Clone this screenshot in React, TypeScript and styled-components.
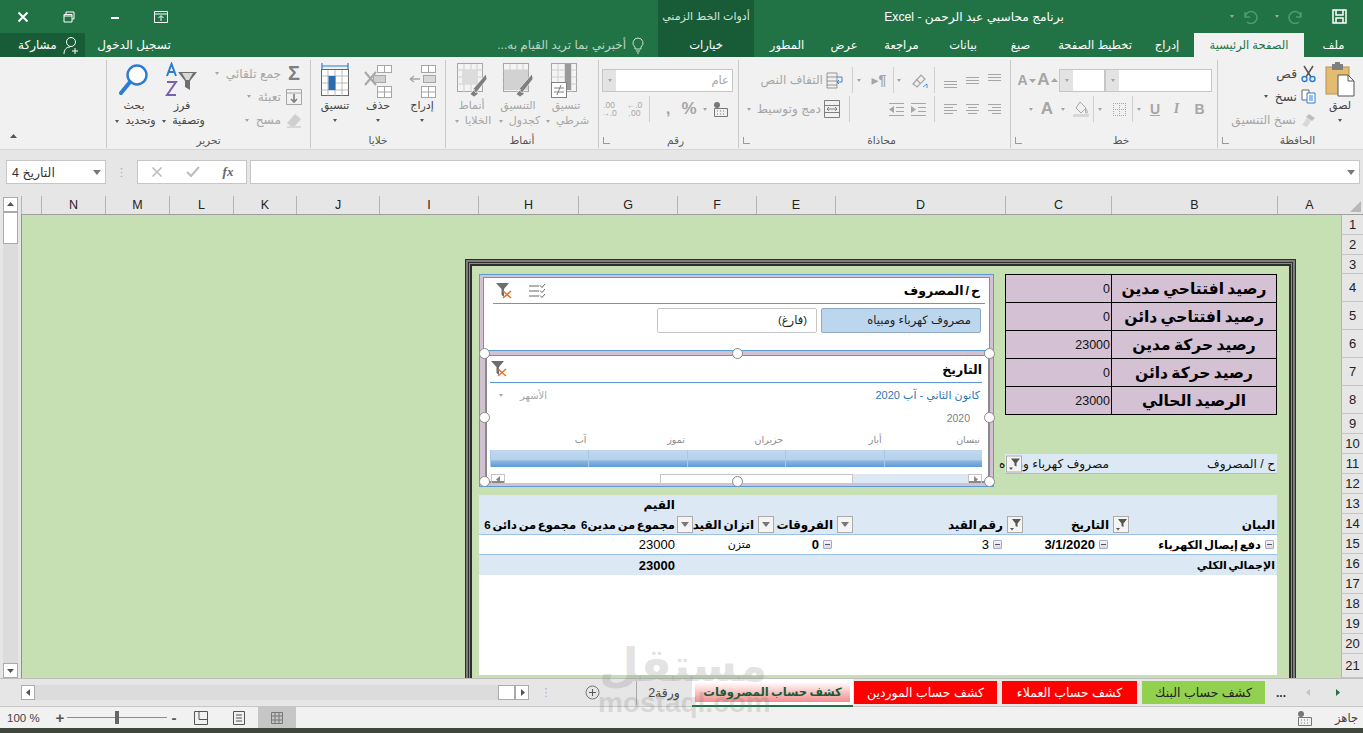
import React from 'react';
import styled, { createGlobalStyle } from 'styled-components';

const UI_FONT = '"Liberation Sans", "DejaVu Sans", sans-serif';
const GREEN = '#217346';
const DARK_GREEN = '#185c37';
const OFF = '#a6a6a6';
const ICON = '#7f7f7f';
const BLUE = '#2b7cd3';

const GlobalStyle = createGlobalStyle`
    html, body {
        margin: 0;
        width: 1363px;
        height: 733px;
        overflow: hidden;
        background: #f1f1f1;
        font-family: ${UI_FONT};
    }
    * { box-sizing: border-box; }
`;

const Page = styled.div`
    position: relative;
    width: 1363px;
    height: 733px;
    display: flex;
    flex-direction: column;
    overflow: hidden;
`;

/* title bar */
const TitleBar = styled.div`
    height: 33px;
    background: ${GREEN};
    display: flex;
    align-items: center;
    color: #fff;
`;
const WindowButton = styled.div`
    width: 46px;
    display: flex;
    justify-content: center;
    align-items: center;
`;
const TitleSpacer = styled.div<{ $w: number }>`
    width: ${(p) => p.$w}px;
    flex: none;
`;
const ContextTitle = styled.div`
    width: 96px;
    height: 33px;
    background: ${DARK_GREEN};
    display: flex;
    align-items: center;
    justify-content: center;
    font-size: 11px;
    color: #d5e5da;
    white-space: nowrap;
    direction: rtl;
`;
const DocTitle = styled.div`
    width: 440px;
    text-align: center;
    font-size: 12.2px;
    white-space: nowrap;
    direction: rtl;
`;
const QatSlot = styled.div<{ $w: number }>`
    width: ${(p) => p.$w}px;
    display: flex;
    justify-content: center;
    align-items: center;
`;

/* tab strip */
const TabStrip = styled.div`
    height: 24px;
    background: ${GREEN};
    display: flex;
    flex-direction: row-reverse;
    align-items: stretch;
    color: #fff;
`;
const TabItem = styled.div<{ $w: number; $active?: boolean; $context?: boolean }>`
    width: ${(p) => p.$w}px;
    display: flex;
    align-items: center;
    justify-content: center;
    font-size: 11.5px;
    white-space: nowrap;
    direction: rtl;
    background: ${(p) => (p.$active ? '#f1f1f1' : p.$context ? DARK_GREEN : 'transparent')};
    color: ${(p) => (p.$active ? GREEN : '#fff')};
`;
const TellMe = styled.div`
    flex: 1;
    display: flex;
    flex-direction: row-reverse;
    align-items: center;
    gap: 6px;
    padding-right: 14px;
    font-size: 12px;
    color: #bcd4c5;
    white-space: nowrap;
`;
const TellMeText = styled.span`
    direction: rtl;
`;
const SignIn = styled.div`
    width: 98px;
    display: flex;
    align-items: center;
    justify-content: center;
    font-size: 12px;
    white-space: nowrap;
    direction: rtl;
`;
const ShareBox = styled.div`
    width: 85px;
    background: ${DARK_GREEN};
    display: flex;
    align-items: center;
    gap: 6px;
    padding-left: 18px;
    font-size: 12px;
    white-space: nowrap;
`;

/* ribbon */
const Ribbon = styled.div`
    height: 93px;
    background: #f1f1f1;
    display: flex;
    flex-direction: row-reverse;
    border-bottom: 1px solid #d6d6d6;
    padding-top: 3px;
`;
const GroupBox = styled.section<{ $w: number }>`
    width: ${(p) => p.$w}px;
    height: 88px;
    border-left: 1px solid #c9c9c9;
    display: flex;
    flex-direction: column;
    position: relative;
`;
const GroupBody = styled.div`
    flex: 1;
    display: flex;
    flex-direction: row-reverse;
    min-height: 0;
`;
const GroupLabel = styled.div<{ $launcher?: boolean }>`
    height: 16px;
    line-height: 16px;
    text-align: center;
    font-size: 10.5px;
    color: #555;
    direction: rtl;
    white-space: nowrap;
    padding-left: ${(p) => (p.$launcher ? 14 : 0)}px;
`;
const Launcher = styled.div`
    position: absolute;
    left: 4px;
    bottom: 4px;
    width: 7px;
    height: 7px;
    border-left: 1px solid #9a9a9a;
    border-bottom: 1px solid #9a9a9a;
`;
const CollapseCell = styled.div`
    flex: 1;
    display: flex;
    align-items: flex-end;
    padding: 0 0 8px 9px;
`;
const LargeButton = styled.div<{ $w: number; $off?: boolean }>`
    width: ${(p) => p.$w}px;
    flex: none;
    display: flex;
    flex-direction: column;
    align-items: center;
    padding-top: 2px;
    font-size: 11px;
    line-height: 15px;
    text-align: center;
    direction: rtl;
    white-space: nowrap;
    color: ${(p) => (p.$off ? OFF : '#444')};
`;
const IconSlot = styled.div`
    height: 36px;
    display: flex;
    align-items: center;
    justify-content: center;
`;
const CaretLine = styled.div`
    height: 15px;
    display: flex;
    align-items: center;
`;
const Caret = styled.span<{ $off?: boolean }>`
    display: inline-block;
    width: 0;
    height: 0;
    margin: 0 3px;
    vertical-align: middle;
    border-left: 2.5px solid transparent;
    border-right: 2.5px solid transparent;
    border-top: 3px solid ${(p) => (p.$off ? OFF : '#555')};
`;
const BigCaret = styled(Caret)`
    border-left-width: 4.5px;
    border-right-width: 4.5px;
    border-top-width: 5px;
    border-top-color: #777;
`;
const SmallStack = styled.div<{ $w: number; $pad?: number }>`
    width: ${(p) => p.$w}px;
    flex: none;
    display: flex;
    flex-direction: column;
    padding-top: 2px;
    padding-right: ${(p) => p.$pad ?? 1}px;
`;
const SmallRow = styled.div<{ $off?: boolean }>`
    height: 23.5px;
    display: flex;
    align-items: center;
    gap: 4px;
    direction: rtl;
    font-size: 12.2px;
    white-space: nowrap;
    color: ${(p) => (p.$off ? OFF : '#444')};
`;
const ToolColumn = styled.div`
    display: flex;
    flex-direction: column;
    width: 100%;
    padding-top: 8px;
    gap: 5px;
`;
const ToolRow = styled.div`
    height: 24px;
    display: flex;
    flex-direction: row-reverse;
    align-items: center;
`;
const Tool = styled.div<{ $w: number; $large?: boolean }>`
    width: ${(p) => p.$w}px;
    flex: none;
    display: flex;
    align-items: center;
    justify-content: center;
    font-size: ${(p) => (p.$large ? 17 : 14)}px;
    font-weight: 700;
    color: ${OFF};
`;
const ItalicTool = styled(Tool)`
    font-style: italic;
    font-family: "Liberation Serif", serif;
`;
const UnderlineTool = styled(Tool)`
    text-decoration: underline;
`;
const SigmaTool = styled(Tool)`
    font-size: 20px;
    color: ${ICON};
`;
const ToolText = styled.div`
    display: flex;
    align-items: center;
    gap: 3px;
    direction: rtl;
    font-size: 12.2px;
    color: ${OFF};
    white-space: nowrap;
`;
const ToolDivider = styled.div`
    width: 1px;
    height: 26px;
    background: #cfcfcf;
    flex: none;
`;
const Combo = styled.div<{ $w: number }>`
    width: ${(p) => p.$w}px;
    height: 23px;
    flex: none;
    border: 1px solid #c6c6c6;
    background: #fff;
    display: flex;
    align-items: center;
    font-size: 11.5px;
    color: ${OFF};
    padding-right: 3px;
    position: relative;
    direction: rtl;
`;
const ComboArrow = styled.div`
    position: absolute;
    left: 0;
    top: 0;
    bottom: 0;
    width: 13px;
    background: #e3e3e3;
    display: flex;
    align-items: center;
    justify-content: center;
`;
const DecimalStack = styled.div`
    display: flex;
    flex-direction: column;
    align-items: center;
    font-size: 8.5px;
    font-weight: 400;
    line-height: 8px;
    color: ${OFF};
`;

/* formula bar */
const FormulaBar = styled.div`
    height: 46px;
    background: #e6e6e6;
    display: flex;
    align-items: flex-start;
    padding: 10px 3px 0 6px;
`;
const NameBox = styled.div`
    width: 100px;
    height: 24px;
    background: #fff;
    border: 1px solid #c6c6c6;
    display: flex;
    align-items: center;
    justify-content: space-between;
    padding: 0 1px 0 5px;
    font-size: 12.5px;
    color: #333;
`;
const NameText = styled.span`
    direction: rtl;
    white-space: nowrap;
`;
const Grip = styled.div`
    width: 31px;
    height: 24px;
    display: flex;
    justify-content: center;
    align-items: center;
    color: #aaa;
    font-size: 11px;
`;
const FormulaButtons = styled.div`
    width: 110px;
    height: 24px;
    background: #fff;
    border: 1px solid #c6c6c6;
    display: flex;
    align-items: center;
    justify-content: space-around;
    padding: 0 1px;
`;
const FxLabel = styled.span`
    font-family: "Liberation Serif", serif;
    font-style: italic;
    font-weight: 700;
    font-size: 13px;
    color: #666;
`;
const FormulaInput = styled.div`
    flex: 1;
    height: 24px;
    margin-left: 3px;
    background: #fff;
    border: 1px solid #c6c6c6;
    display: flex;
    align-items: center;
    justify-content: flex-end;
    padding-right: 1px;
`;

/* worksheet */
const Workbook = styled.div`
    height: 482px;
    display: flex;
`;
const VScroll = styled.div`
    width: 21px;
    background: #e6e6e6;
    display: flex;
    flex-direction: column;
    align-items: center;
    padding: 1px 1px 0 0;
`;
const VButton = styled.div`
    width: 15px;
    height: 15px;
    background: #fff;
    border: 1px solid #ababab;
    display: flex;
    align-items: center;
    justify-content: center;
    flex: none;
`;
const VThumb = styled.div`
    width: 15px;
    height: 32px;
    flex: none;
    background: #fff;
    border: 1px solid #ababab;
`;
const VTrack = styled.div`
    flex: 1;
    width: 15px;
    background: #dcdcdc;
`;
const SheetArea = styled.div`
    flex: 1;
    display: flex;
    flex-direction: column;
    min-width: 0;
`;
const ColumnHeaders = styled.div`
    height: 19px;
    flex: none;
    display: flex;
    flex-direction: row-reverse;
    background: #e6e6e6;
    border-bottom: 1px solid #9f9f9f;
`;
const Corner = styled.div`
    width: 22px;
    position: relative;
    overflow: hidden;
    &::after {
        content: '';
        position: absolute;
        right: 2px;
        bottom: 2px;
        border-left: 11px solid transparent;
        border-bottom: 11px solid #b8b8b8;
    }
`;
const ColumnCell = styled.div<{ $w: number }>`
    width: ${(p) => p.$w}px;
    border-left: 1px solid #b4b4b4;
    font-size: 12.5px;
    line-height: 18px;
    text-align: center;
    color: #222;
`;
const SheetBody = styled.div`
    flex: 1;
    display: flex;
    flex-direction: row-reverse;
    min-height: 0;
`;
const RowHeaders = styled.div`
    width: 22px;
    flex: none;
    background: #e6e6e6;
    overflow: hidden;
`;
const RowCell = styled.div<{ $h: number }>`
    height: ${(p) => p.$h}px;
    border-bottom: 1px solid #c4c4c4;
    border-left: 1px solid #b4b4b4;
    font-size: 13px;
    display: flex;
    align-items: center;
    justify-content: center;
    color: #222;
`;
const Canvas = styled.div`
    flex: 1;
    background: #c6e0b4;
    overflow: hidden;
    border-left: 1px solid #8f8f8f;
    display: flex;
    justify-content: flex-end;
    padding: 44px 45px 0 0;
`;
const Frame = styled.div`
    width: 831px;
    height: 470px;
    flex: none;
    border: 1px solid #2e2e2e;
    box-shadow: inset 0 0 0 2px #7d7d7d, inset 0 0 0 3px #2e2e2e, inset 0 0 0 4px #8d8d8d, inset 0 0 0 6px #2e2e2e;
    padding: 14px 18px 0 13px;
`;
const FrameTop = styled.div`
    height: 221px;
    display: flex;
    flex-direction: row-reverse;
    justify-content: space-between;
`;
const SideColumn = styled.div`
    width: 272px;
    display: flex;
    flex-direction: column;
`;
const BalanceTable = styled.div`
    display: grid;
    direction: rtl;
    grid-template-columns: 165px 106px;
    grid-auto-rows: 28px;
    border-top: 1px solid #000;
    border-right: 1px solid #000;
    background: #d4c1d4;
`;
const BalanceLabel = styled.div`
    border-left: 1px solid #000;
    border-bottom: 1px solid #000;
    display: flex;
    align-items: center;
    justify-content: center;
    font-size: 15.5px;
    word-spacing: -1px;
    font-weight: 700;
    color: #000;
    white-space: nowrap;
`;
const BalanceValue = styled.div`
    border-left: 1px solid #000;
    border-bottom: 1px solid #000;
    display: flex;
    align-items: center;
    justify-content: flex-start;
    padding-right: 1px;
    font-size: 12.5px;
    color: #111;
`;
const PageFilter = styled.div`
    margin-top: 39px;
    height: 20px;
    background: #dce9f5;
    border-bottom: 1px solid #9cc2e5;
    display: grid;
    direction: rtl;
    grid-template-columns: 166px 106px;
    align-items: center;
    font-size: 12.2px;
    color: #111;
`;
const PageFilterKey = styled.div`
    padding-right: 2px;
    white-space: nowrap;
`;
const PageFilterValue = styled.div`
    position: relative;
    padding-right: 2px;
    white-space: nowrap;
`;
const FilterBadge = styled.div`
    width: 16px;
    height: 17px;
    flex: none;
    background: #f4f4f4;
    border: 1px solid #ababab;
    display: flex;
    align-items: center;
    justify-content: center;
`;
const PageFilterBadge = styled(FilterBadge)`
    position: absolute;
    left: 1px;
    top: 50%;
    transform: translateY(-50%);
`;

/* slicers */
const SlicerStack = styled.div`
    position: relative;
    width: 515px;
    height: 213px;
    background: #d1c1d2;
    border: 1px solid #5b9bd5;
    padding: 2px 3px 0 3px;
`;
const Slicer = styled.div`
    height: 74px;
    background: #fff;
    border: 1px solid #5b9bd5;
    padding: 0 4px 0 9px;
`;
const SlicerHead = styled.div`
    height: 26px;
    display: flex;
    flex-direction: row-reverse;
    align-items: center;
    justify-content: space-between;
    border-bottom: 1px solid #5b9bd5;
    padding: 0 5px 0 2px;
`;
const SlicerTitle = styled.div`
    direction: rtl;
    font-size: 12.5px;
    word-spacing: -1.5px;
    font-weight: 700;
    color: #000;
    white-space: nowrap;
`;
const SlicerTools = styled.div`
    display: flex;
    align-items: center;
    gap: 15px;
`;
const SlicerItems = styled.div`
    display: flex;
    flex-direction: row-reverse;
    gap: 4px;
    padding: 4px 4px 0 0;
`;
const SlicerItem = styled.div<{ $on?: boolean }>`
    width: 160px;
    height: 25px;
    border: 1px solid ${(p) => (p.$on ? '#8fa9c3' : '#c6c6c6')};
    border-radius: 2px;
    background: ${(p) => (p.$on ? '#bcd6ee' : '#fff')};
    direction: rtl;
    font-size: 11.5px;
    line-height: 23px;
    padding-right: 9px;
    color: #222;
`;
const Timeline = styled.div`
    position: relative;
    margin: 4px 0 0 2px;
    height: 128px;
    background: #fff;
    border: 2px solid #8a8a8a;
    border-width: 1px 2px 2px 2px;
    padding: 0 6px 0 3px;
`;
const TimelineHead = styled(SlicerHead)`
    height: 27px;
    padding: 0;
`;
const RangeRow = styled.div`
    height: 25px;
    display: flex;
    flex-direction: row-reverse;
    justify-content: space-between;
    align-items: center;
    padding: 0 2px 0 6px;
`;
const RangeText = styled.div`
    direction: rtl;
    font-size: 11px;
    color: #2e75b6;
`;
const LevelPicker = styled.div`
    display: flex;
    flex-direction: row-reverse;
    gap: 14px;
    align-items: center;
    font-size: 10px;
    color: ${OFF};
`;
const YearRow = styled.div`
    height: 20px;
    text-align: right;
    font-size: 10.5px;
    line-height: 20px;
    color: #7f7f7f;
    padding-right: 12px;
`;
const MonthRow = styled.div`
    display: grid;
    direction: rtl;
    grid-template-columns: repeat(5, 1fr);
    height: 22px;
    align-items: center;
`;
const MonthLabel = styled.div`
    font-size: 9.5px;
    color: #8a8a8a;
    padding-right: 2px;
`;
const MonthBar = styled.div`
    display: grid;
    direction: rtl;
    grid-template-columns: repeat(5, 1fr);
    height: 17px;
`;
const MonthSegment = styled.div`
    background: linear-gradient(#c0d8ef 0%, #b5d1ec 58%, #8fb7e0 64%, #5b9bd5 100%);
    border-left: 1px solid #a9c8e6;
`;
const TimelineScroll = styled.div`
    margin-top: 7px;
    height: 9px;
    display: flex;
    flex-direction: row-reverse;
    align-items: stretch;
    overflow: hidden;
`;
const ScrollEnd = styled.div`
    width: 14px;
    border: 1px solid #c6c6c6;
    border-bottom: 0;
    display: flex;
    align-items: center;
    justify-content: center;
`;
const TimelineGap = styled.div<{ $w: number; $tint?: boolean }>`
    width: ${(p) => p.$w}px;
    background: ${(p) => (p.$tint ? '#dce9f5' : '#fff')};
`;
const TimelineThumb = styled.div`
    width: 193px;
    background: #fff;
    border: 1px solid #c6c6c6;
    border-bottom: 0;
`;
const Handle = styled.div<{ $x: number; $y: number }>`
    position: absolute;
    left: ${(p) => p.$x - 6}px;
    top: ${(p) => p.$y - 6}px;
    width: 11px;
    height: 11px;
    border-radius: 50%;
    background: #fff;
    border: 1.5px solid #8a8a8a;
`;

/* pivot */
const Pivot = styled.div`
    height: 180px;
    background: #fff;
    display: grid;
    direction: rtl;
    grid-template-columns: 166px 106px 170px 79px 79px 99px 99px;
    grid-auto-rows: 20px;
    align-content: start;
    color: #000;
`;
const PivotCell = styled.div<{ $tone?: 'head' | 'total' | 'body'; $bold?: boolean; $size?: number; $inset?: number }>`
    display: flex;
    align-items: center;
    justify-content: space-between;
    padding: 0 ${(p) => p.$inset ?? 2}px 0 2px;
    white-space: nowrap;
    word-spacing: -1.5px;
    font-size: ${(p) => p.$size ?? 12}px;
    font-weight: ${(p) => (p.$bold ? 700 : 400)};
    background: ${(p) => (p.$tone === 'body' ? '#fff' : '#dce9f5')};
    border-bottom: ${(p) => (p.$tone === 'total' ? 'none' : '1px solid #9cc2e5')};
`;
const PivotHeadTop = styled(PivotCell)`
    border-bottom: none;
`;
const Outline = styled.span`
    display: inline-block;
    width: 9px;
    height: 9px;
    margin: 0 1px 0 4px;
    flex: none;
    border: 1px solid #a9a9c4;
    border-radius: 1px;
    background: linear-gradient(#f4f4fa, #d9d9e8);
    position: relative;
    &::after {
        content: '';
        position: absolute;
        left: 1px;
        right: 1px;
        top: 3px;
        height: 1px;
        background: #555;
    }
`;
const CellLead = styled.span`
    display: inline-flex;
    align-items: center;
`;

/* sheet tabs */
const SheetTabsBar = styled.div`
    height: 29px;
    background: #e6e6e6;
    border-top: 1px solid #bdbdbd;
    border-bottom: 1px solid #c6c6c6;
    display: flex;
    flex-direction: row-reverse;
    align-items: center;
`;
const TabNav = styled.div`
    width: 98px;
    display: flex;
    flex-direction: row-reverse;
    align-items: center;
    padding-right: 21px;
`;
const NavDots = styled.span`
    margin-right: 18px;
    font-size: 12px;
    font-weight: 700;
    color: #333;
`;
const SheetTab = styled.div<{ $bg: string; $w: number; $fg: string }>`
    width: ${(p) => p.$w}px;
    height: 23px;
    margin-left: 5px;
    background: ${(p) => p.$bg};
    color: ${(p) => p.$fg};
    font-size: 12.5px;
    display: flex;
    align-items: center;
    justify-content: center;
    direction: rtl;
    white-space: nowrap;
`;
const ActiveSheetTab = styled.div`
    width: 161px;
    height: 28px;
    margin-left: 6px;
    margin-right: -4px;
    background: #fff;
    border-bottom: 2px solid ${GREEN};
    padding: 3px;
    display: flex;
`;
const ActiveSheetFill = styled.div`
    flex: 1;
    background: linear-gradient(#fff 0%, #f9c5c5 50%, #f28f8f 100%);
    color: ${DARK_GREEN};
    font-size: 11.6px;
    font-weight: 700;
    word-spacing: -1px;
    display: flex;
    align-items: center;
    justify-content: center;
    direction: rtl;
    white-space: nowrap;
`;
const PlainTab = styled.div`
    width: 50px;
    text-align: center;
    font-size: 12.5px;
    color: #444;
    direction: rtl;
    border-left: 1px solid #aaa;
    line-height: 24px;
    padding-left: 5px;
`;
const AddSheet = styled.div`
    width: 35px;
    margin-right: 26px;
    display: flex;
    justify-content: center;
`;
const HScrollDots = styled.div`
    width: 12px;
    margin-left: 11px;
    margin-right: 23px;
    color: #aaa;
    font-size: 11px;
    text-align: center;
`;
const HScroll = styled.div`
    flex: 1;
    margin-left: 21px;
    display: flex;
    height: 15px;
`;
const HButton = styled.div`
    width: 14px;
    flex: none;
    background: #fff;
    border: 1px solid #ababab;
    display: flex;
    align-items: center;
    justify-content: center;
`;
const HTrack = styled.div`
    flex: 1;
    background: #dcdcdc;
`;
const HThumb = styled.div`
    width: 17px;
    flex: none;
    background: #fff;
    border: 1px solid #ababab;
`;

/* status bar */
const StatusBar = styled.div`
    height: 21px;
    background: #f1f1f1;
    display: flex;
    align-items: center;
    font-size: 11.5px;
    color: #444;
`;
const ZoomText = styled.div`
    width: 53px;
    padding-left: 7px;
    white-space: nowrap;
`;
const ZoomSign = styled.div`
    width: 14px;
    text-align: center;
    font-size: 15px;
    font-weight: 700;
    color: #555;
    line-height: 15px;
`;
const ZoomTrack = styled.div`
    width: 100px;
    height: 1px;
    background: #8c8c8c;
    position: relative;
`;
const ZoomThumb = styled.div`
    position: absolute;
    left: 48px;
    top: -6px;
    width: 4px;
    height: 13px;
    background: #666;
`;
const ViewButton = styled.div<{ $w: number; $on?: boolean }>`
    width: ${(p) => p.$w}px;
    height: 21px;
    display: flex;
    align-items: center;
    justify-content: center;
    background: ${(p) => (p.$on ? '#c6c6c6' : 'transparent')};
`;
const StatusRight = styled.div`
    flex: 1;
    display: flex;
    justify-content: flex-end;
    align-items: center;
    padding-right: 5px;
`;
const ReadyText = styled.div`
    width: 45px;
    text-align: right;
    direction: rtl;
`;
const BottomEdge = styled.div`
    height: 5px;
    background: #3e4739;
`;
const Watermark = styled.div`
    position: absolute;
    left: 598px;
    top: 640px;
    width: 170px;
    text-align: center;
    color: rgba(110, 110, 110, 0.2);
    font-weight: 700;
    pointer-events: none;
`;
const WatermarkAr = styled.div`
    font-size: 46px;
    line-height: 50px;
    direction: rtl;
`;
const WatermarkEn = styled.div`
    font-size: 28px;
    line-height: 26px;
`;

/* icons */
const Svg = ({ w, h, children }: { w: number; h: number; children: React.ReactNode }) => (
    <svg width={w} height={h} viewBox={`0 0 ${w} ${h}`} fill="none" style={{ display: 'block' }}>
        {children}
    </svg>
);

const Arrow = ({ dir, color = '#555' }: { dir: 'l' | 'r' | 'u' | 'd'; color?: string }) => {
    const pts = { l: '6,1 2,4.5 6,8', r: '3,1 7,4.5 3,8', u: '1,6 4.5,2 8,6', d: '1,3 4.5,7 8,3' }[dir];
    return (
        <Svg w={9} h={9}>
            <polygon points={pts} fill={color} />
        </Svg>
    );
};

const FilterGlyph = () => (
    <Svg w={13} h={13}>
        <path d="M3 1h9L8.5 5.5V9L6.5 8V5.5z" fill="#555" />
        <path d="M1 10h4l-2 2.5z" fill="#555" />
    </Svg>
);

const ClearFilter = () => (
    <Svg w={18} h={18}>
        <path d="M1 1h13L9 7v8L6.5 13V7z" fill="#6d6d6d" />
        <path d="M8 9l8 7M16 9l-8 7" stroke="#e0763a" strokeWidth="1.6" />
    </Svg>
);

const MultiSelect = () => (
    <Svg w={18} h={16}>
        <path d="M1 3h10M1 8h10M1 13h10" stroke="#666" />
        <path d="M12 2.5l2 2 3-3.5M12 7.5l2 2 3-3.5M12 12.5l2 2 3-3.5" stroke="#666" />
    </Svg>
);

const PasteIcon = () => (
    <Svg w={30} h={36}>
        <rect x="1" y="5" width="23" height="27" fill="#e3bc72" stroke="#b9924e" />
        <rect x="7" y="2" width="11" height="6" fill="#7f7f7f" />
        <rect x="10" y="0" width="5" height="3" fill="#7f7f7f" />
        <path d="M13 13h10l6 6v15H13z" fill="#fff" stroke="#555" />
        <path d="M23 13v6h6" stroke="#555" />
    </Svg>
);

const ScissorsIcon = () => (
    <Svg w={15} h={18}>
        <path d="M3 1l7 11M12 1L5 12" stroke="#555" strokeWidth="1.5" />
        <circle cx="3.5" cy="14" r="2.5" stroke="#2b7cd3" strokeWidth="1.4" />
        <circle cx="11.5" cy="14" r="2.5" stroke="#2b7cd3" strokeWidth="1.4" />
    </Svg>
);

const CopyIcon = () => (
    <Svg w={15} h={15}>
        <path d="M1 1h7v10H1z" fill="#fff" stroke="#666" />
        <path d="M6 4h8v10H6z" fill="#fff" stroke="#2b7cd3" />
        <path d="M8 7h4M8 9h4M8 11h4" stroke="#2b7cd3" />
    </Svg>
);

const BrushIcon = () => (
    <Svg w={16} h={15}>
        <path d="M9 1l6 4-3 3-6-4z" fill="#bdbdbd" />
        <path d="M7 5l4 3-4 6-5-2z" fill="#d8d8d8" />
    </Svg>
);

const EraserIcon = () => (
    <Svg w={16} h={15}>
        <path d="M9 1l6 5-6 7H5L1 10z" fill="#cfcfcf" />
        <path d="M1 14h14" stroke="#bdbdbd" />
    </Svg>
);

const FillDownIcon = () => (
    <Svg w={16} h={16}>
        <path d="M.5.5h15v15H.5z" stroke={OFF} />
        <path d="M.5 4h15" stroke={OFF} />
        <path d="M8 5v8M5 10l3 3 3-3" stroke={ICON} strokeWidth="1.6" />
    </Svg>
);

const BorderIcon = () => (
    <Svg w={15} h={15}>
        <path d="M1 1.5h13M1 7.5h13M1 13.5h13M1.5 1v13M7.5 1v13M13.5 1v13" stroke={OFF} strokeDasharray="1 1" />
    </Svg>
);

const BucketIcon = () => (
    <Svg w={16} h={17}>
        <path d="M7 1l6 6-5 5-5-5zM13 8c1 2 2 3 1 4s-2 0-1-4" stroke={OFF} />
        <rect x="0" y="13" width="16" height="3" fill="#d8d8d8" />
    </Svg>
);

const LinesIcon = ({ kind }: { kind: 'l' | 'c' | 'r' | 't' | 'm' | 'b' }) => {
    const rows = kind === 't' ? [2, 5, 8] : kind === 'm' ? [5, 8, 11] : kind === 'b' ? [9, 12, 15] : [3, 6, 9, 12];
    const x = (i: number) => {
        if (kind === 'l') return i % 2 ? [1, 10] : [1, 14];
        if (kind === 'r') return i % 2 ? [5, 14] : [1, 14];
        if (kind === 'c') return i % 2 ? [3, 12] : [1, 14];
        return [1, 14];
    };
    return (
        <Svg w={15} h={16}>
            {rows.map((y, i) => (
                <path key={y} d={`M${x(i)[0]} ${y}.5H${x(i)[1]}`} stroke={OFF} />
            ))}
        </Svg>
    );
};

const IndentIcon = ({ back }: { back?: boolean }) => (
    <Svg w={17} h={15}>
        <path d="M1 1.5h15M8 5.5h8M8 9.5h8M1 13.5h15" stroke={OFF} />
        <path d={back ? 'M1 7.5L6 4v7z' : 'M6 7.5L1 4v7z'} fill={OFF} />
    </Svg>
);

const WrapIcon = () => (
    <Svg w={17} h={17}>
        <path d="M1 1h10v15H1zM1 5h10M1 9h10M1 13h10" stroke={ICON} strokeWidth="0.8" />
        <path d="M11 5h5v5h-5M13 8l-2 2 2 2" stroke={BLUE} strokeWidth="0.9" />
    </Svg>
);

const MergeIcon = () => (
    <Svg w={16} h={18}>
        <path d="M.5.5h15v17H.5zM.5 5.5h15M.5 12.5h15" stroke={ICON} />
        <path d="M3 9h10M3 9l2-2M3 9l2 2M13 9l-2-2M13 9l-2 2" stroke={ICON} />
    </Svg>
);

const OrientIcon = () => (
    <Svg w={17} h={17}>
        <path d="M2 12L10 3l4 4-8 8zM5 7l4 4" stroke={OFF} strokeWidth="1.2" />
        <path d="M12 15l4-3M16 12v4" stroke={BLUE} strokeWidth="0.8" />
    </Svg>
);

const CellsIcon = ({ kind }: { kind: 'insert' | 'delete' | 'format' }) => {
    if (kind === 'format') {
        return (
            <Svg w={30} h={36}>
                <path d="M2 4h26M2 1v6M28 1v6" stroke={BLUE} strokeWidth="1.2" />
                <rect x="1.5" y="7.5" width="27" height="26" fill="#fff" stroke="#666" />
                <path d="M1.5 14h27M1.5 21h27M1.5 28h27M8 8v26M15 8v26M22 8v26" stroke="#aaa" strokeWidth="0.8" />
                <rect x="8.5" y="14" width="7" height="14" fill="#2b6cb0" />
            </Svg>
        );
    }
    const off = kind === 'delete';
    return (
        <Svg w={30} h={36}>
            <rect x="14.5" y="3.5" width="14" height="7" fill="#fff" stroke={OFF} />
            <path d="M21.5 3.5v7" stroke={OFF} />
            <rect x={off ? 10.5 : 16.5} y="13.5" width="12" height="7" fill={off ? '#cfcfcf' : '#d8d8d8'} stroke={OFF} />
            <rect x="14.5" y="24.5" width="14" height="11" fill="#fff" stroke={OFF} />
            <path d="M14.5 30h14M21.5 24.5v11" stroke={OFF} />
            {off ? (
                <path d="M2 10l11 13M13 10L2 23" stroke={OFF} strokeWidth="2" />
            ) : (
                <path d="M3 17h10M3 17l4-3M3 17l4 3" stroke={OFF} strokeWidth="1.4" />
            )}
        </Svg>
    );
};

const StyleIcon = ({ kind }: { kind: 'cond' | 'table' | 'cell' }) => (
    <Svg w={32} h={36}>
        <rect x="1.5" y="1.5" width="25" height="28" fill="#f4f4f4" stroke={OFF} />
        <path d="M1.5 8h25M1.5 15h25M1.5 22h25M8 2v28M15 2v28M21 2v28" stroke="#cfcfcf" />
        {kind === 'cond' && <rect x="15" y="2" width="6" height="26" fill="#9a9a9a" />}
        {kind === 'table' && <rect x="2" y="8" width="24" height="20" fill="#d2d2d2" />}
        {kind === 'cell' && <rect x="6" y="8" width="16" height="14" fill="#dcdcdc" />}
        {kind === 'cond' ? (
            <>
                <rect x="1.5" y="20.5" width="15" height="15" fill="#fff" stroke={ICON} />
                <path d="M4 26h10M4 30h10M11 23l-4 10" stroke={ICON} />
            </>
        ) : (
            <path d="M30 12L17 27l3 4L31 17zM19 27l-5 5 4 3 4-3" fill={ICON} stroke="#fff" strokeWidth="0.6" />
        )}
    </Svg>
);

const SortIcon = () => (
    <Svg w={34} h={36}>
        <path d="M2 14L6.5 2 11 14M3.5 10h6" stroke={BLUE} strokeWidth="2" />
        <path d="M2 20h9L2 33h9" stroke="#7b5fb0" strokeWidth="2" />
        <path d="M13 10h19l-7 9v9l-5-3v-6z" fill="#6f6f6f" />
        <path d="M17 11h11l-4 7h-3z" fill="#d8d8d8" />
    </Svg>
);

const SearchIcon = () => (
    <Svg w={30} h={36}>
        <circle cx="18" cy="13" r="9.5" fill="#fff" stroke={BLUE} strokeWidth="2.4" />
        <path d="M11 20L2 31" stroke={BLUE} strokeWidth="4" strokeLinecap="round" />
    </Svg>
);

const BulbIcon = () => (
    <Svg w={12} h={17}>
        <path d="M6 1a5 5 0 0 1 3 9v2H3v-2A5 5 0 0 1 6 1zM4 14h4M5 16h2" stroke="#cfe0d5" />
    </Svg>
);

const UserPlus = () => (
    <Svg w={17} h={19}>
        <circle cx="8" cy="6" r="4.5" stroke="#fff" />
        <path d="M1 18c0-5 3-7 6-7M12 12v6M9 15h6" stroke="#fff" />
    </Svg>
);

const RibbonDisplay = () => (
    <Svg w={14} h={12}>
        <path d="M.5.5h13v11H.5zM.5 3h13M7 10V5M4.5 7L7 4.5 9.5 7" stroke="#fff" />
    </Svg>
);

const RestoreIcon = () => (
    <Svg w={12} h={12}>
        <path d="M3 3V1h8v7H9M1 3.5h8v7.5H1z" stroke="#fff" />
        <path d="M1 5h8" stroke="#fff" />
    </Svg>
);

const CloseIcon = () => (
    <Svg w={12} h={12}>
        <path d="M1.5 1.5l9 9M10.5 1.5l-9 9" stroke="#fff" strokeWidth="2" />
    </Svg>
);

const MinimizeIcon = () => (
    <Svg w={12} h={12}>
        <path d="M2 7h8" stroke="#fff" strokeWidth="2" />
    </Svg>
);

const SaveIcon = () => (
    <Svg w={15} h={15}>
        <path d="M1 1h13v13H1zM4 1v5h7V1M4 14V9h7v5" stroke="#fff" strokeWidth="1.5" />
    </Svg>
);

const UndoIcon = ({ flip }: { flip?: boolean }) => (
    <Svg w={16} h={14}>
        <path
            d={flip ? 'M14 2v5H9M14 7A6 6 0 1 0 12 12' : 'M2 2v5h5M2 7a6 6 0 1 1 2 5'}
            stroke="#4f9a70"
            strokeWidth="1.5"
        />
    </Svg>
);

const Box = ({ kind }: { kind: 'grid' | 'layout' | 'break' | 'calc' }) => (
    <Svg w={16} h={16}>
        {kind === 'grid' && <path d="M2.5 2.5h11v11h-11zM2.5 6h11M2.5 10h11M6 2.5v11M10 2.5v11" stroke="#777" />}
        {kind === 'layout' && <path d="M2.5 1.5h11v13h-11zM5 5h6M5 8h6M5 11h6" stroke="#555" />}
        {kind === 'break' && <path d="M1.5 1.5h13v13h-13zM6 1.5v8h9" stroke="#555" />}
        {kind === 'calc' && (
            <>
                <circle cx="4" cy="4" r="3" fill="#777" />
                <path d="M1.5 7.5h13v8h-13zM4 10h1M7 10h1M10 10h1M4 13h1M7 13h1M10 13h1" stroke="#777" />
            </>
        )}
    </Svg>
);

/* data */
const columns: [string, number][] = [
    ['A', 64], ['B', 166], ['C', 106], ['D', 170], ['E', 79], ['F', 79], ['G', 99], ['H', 100],
    ['I', 99], ['J', 83], ['K', 63], ['L', 64], ['M', 64], ['N', 64], ['', 20],
];
const rowHeights = [20, 20, 19, 28, 28, 28, 28, 28, 20, 20, 20, 20, 20, 20, 20, 20, 20, 20, 20, 20, 24];
const balances: [string, string][] = [
    ['رصيد افتتاحي مدين', '0'],
    ['رصيد افتتاحي دائن', '0'],
    ['رصيد حركة مدين', '23000'],
    ['رصيد حركة دائن', '0'],
    ['الرصيد الحالي', '23000'],
];
const ribbonTabs: [string, number][] = [
    ['ملف', 59], ['الصفحة الرئيسية', 110], ['إدراج', 54], ['تخطيط الصفحة', 90], ['صيغ', 59],
    ['بيانات', 56], ['مراجعة', 67], ['عرض', 48], ['المطور', 66],
];
const months = ['نيسان', 'أيار', 'حزيران', 'تموز', 'آب'];

function Group({ w, label, launcher, children }: { w: number; label: string; launcher?: boolean; children: React.ReactNode }) {
    return (
        <GroupBox $w={w}>
            <GroupBody>{children}</GroupBody>
            <GroupLabel $launcher={launcher}>{label}</GroupLabel>
            {launcher && <Launcher />}
        </GroupBox>
    );
}

function RibbonContent() {
    return (
        <Ribbon>
            <Group w={146} label="الحافظة" launcher>
                <LargeButton $w={46}>
                    <IconSlot>
                        <PasteIcon />
                    </IconSlot>
                    لصق
                    <CaretLine><Caret /></CaretLine>
                </LargeButton>
                <SmallStack $w={98}>
                    <SmallRow>
                        <ScissorsIcon />
                        قص
                    </SmallRow>
                    <SmallRow>
                        <CopyIcon />
                        نسخ
                        <Caret />
                    </SmallRow>
                    <SmallRow $off>
                        <BrushIcon />
                        نسخ التنسيق
                    </SmallRow>
                </SmallStack>
            </Group>
            <Group w={207} label="خط" launcher>
                <ToolColumn>
                    <ToolRow>
                        <TitleSpacer $w={5} />
                        <Combo $w={107}>
                            <ComboArrow>
                                <Caret $off />
                            </ComboArrow>
                        </Combo>
                        <Combo $w={46}>
                            <ComboArrow>
                                <Caret $off />
                            </ComboArrow>
                        </Combo>
                        <Tool $w={22} $large>A<Arrow dir="u" color={OFF} /></Tool>
                        <Tool $w={20}>A<Arrow dir="d" color={OFF} /></Tool>
                    </ToolRow>
                    <ToolRow>
                        <TitleSpacer $w={6} />
                        <Tool $w={23}>B</Tool>
                        <ItalicTool $w={23}>I</ItalicTool>
                        <UnderlineTool $w={20}>U</UnderlineTool>
                        <Tool $w={12}><Caret $off /></Tool>
                        <ToolDivider />
                        <Tool $w={26}><BorderIcon /></Tool>
                        <Tool $w={12}><Caret $off /></Tool>
                        <ToolDivider />
                        <Tool $w={24}><BucketIcon /></Tool>
                        <Tool $w={12}><Caret $off /></Tool>
                        <Tool $w={20} $large>A</Tool>
                        <Tool $w={12}><Caret $off /></Tool>
                    </ToolRow>
                </ToolColumn>
            </Group>
            <Group w={272} label="محاذاة" launcher>
                <ToolColumn>
                    <ToolRow>
                        <TitleSpacer $w={5} />
                        <Tool $w={22}><LinesIcon kind="t" /></Tool>
                        <Tool $w={22}><LinesIcon kind="m" /></Tool>
                        <Tool $w={22}><LinesIcon kind="b" /></Tool>
                        <TitleSpacer $w={4} />
                        <ToolDivider />
                        <Tool $w={30}><OrientIcon /></Tool>
                        <Tool $w={10}><Caret $off /></Tool>
                        <ToolDivider />
                        <Tool $w={28}>▸¶</Tool>
                        <Tool $w={12}><Caret $off /></Tool>
                        <ToolDivider />
                        <TitleSpacer $w={9} />
                        <ToolText>
                            <WrapIcon />
                            التفاف النص
                        </ToolText>
                    </ToolRow>
                    <ToolRow>
                        <TitleSpacer $w={5} />
                        <Tool $w={22}><LinesIcon kind="r" /></Tool>
                        <Tool $w={22}><LinesIcon kind="c" /></Tool>
                        <Tool $w={22}><LinesIcon kind="l" /></Tool>
                        <TitleSpacer $w={4} />
                        <ToolDivider />
                        <TitleSpacer $w={5} />
                        <Tool $w={22}><IndentIcon /></Tool>
                        <Tool $w={22}><IndentIcon back /></Tool>
                        <TitleSpacer $w={35} />
                        <ToolDivider />
                        <TitleSpacer $w={9} />
                        <ToolText>
                            <MergeIcon />
                            دمج وتوسيط
                            <Caret $off />
                        </ToolText>
                    </ToolRow>
                </ToolColumn>
            </Group>
            <Group w={140} label="رقم" launcher>
                <ToolColumn>
                    <ToolRow>
                        <TitleSpacer $w={5} />
                        <Combo $w={131}>
                            عام
                            <ComboArrow>
                                <Caret $off />
                            </ComboArrow>
                        </Combo>
                    </ToolRow>
                    <ToolRow>
                        <TitleSpacer $w={6} />
                        <Tool $w={22}><Box kind="calc" /></Tool>
                        <Tool $w={10}><Caret $off /></Tool>
                        <Tool $w={22} $large>%</Tool>
                        <Tool $w={20} $large>,</Tool>
                        <TitleSpacer $w={8} />
                        <ToolDivider />
                        <Tool $w={29}>
                            <DecimalStack>
                                <span>←.0</span>
                                <span>.00</span>
                            </DecimalStack>
                        </Tool>
                        <Tool $w={22}>
                            <DecimalStack>
                                <span>.00</span>
                                <span>→.0</span>
                            </DecimalStack>
                        </Tool>
                    </ToolRow>
                </ToolColumn>
            </Group>
            <Group w={153} label="أنماط">
                <TitleSpacer $w={8} />
                <LargeButton $w={48} $off>
                    <IconSlot><StyleIcon kind="cond" /></IconSlot>
                    تنسيق
                    <span>شرطي <Caret $off /></span>
                </LargeButton>
                <LargeButton $w={48} $off>
                    <IconSlot><StyleIcon kind="table" /></IconSlot>
                    التنسيق
                    <span>كجدول <Caret $off /></span>
                </LargeButton>
                <LargeButton $w={45} $off>
                    <IconSlot><StyleIcon kind="cell" /></IconSlot>
                    أنماط
                    <span>الخلايا <Caret $off /></span>
                </LargeButton>
            </Group>
            <Group w={135} label="خلايا">
                <LargeButton $w={46}>
                    <IconSlot><CellsIcon kind="insert" /></IconSlot>
                    إدراج
                    <CaretLine><Caret /></CaretLine>
                </LargeButton>
                <LargeButton $w={42}>
                    <IconSlot><CellsIcon kind="delete" /></IconSlot>
                    حذف
                    <CaretLine><Caret /></CaretLine>
                </LargeButton>
                <LargeButton $w={44}>
                    <IconSlot><CellsIcon kind="format" /></IconSlot>
                    تنسيق
                    <CaretLine><Caret /></CaretLine>
                </LargeButton>
            </Group>
            <Group w={204} label="تحرير">
                <SmallStack $w={104} $pad={7}>
                    <SmallRow $off>
                        <SigmaTool $w={18}>Σ</SigmaTool>
                        جمع تلقائي
                        <Caret $off />
                    </SmallRow>
                    <SmallRow $off>
                        <Tool $w={18}><FillDownIcon /></Tool>
                        تعبئة
                        <Caret $off />
                    </SmallRow>
                    <SmallRow $off>
                        <Tool $w={18}><EraserIcon /></Tool>
                        مسح
                        <Caret $off />
                    </SmallRow>
                </SmallStack>
                <LargeButton $w={48}>
                    <IconSlot><SortIcon /></IconSlot>
                    فرز
                    <span>وتصفية <Caret /></span>
                </LargeButton>
                <LargeButton $w={48}>
                    <IconSlot><SearchIcon /></IconSlot>
                    بحث
                    <span>وتحديد <Caret /></span>
                </LargeButton>
            </Group>
            <CollapseCell>
                <Arrow dir="u" />
            </CollapseCell>
        </Ribbon>
    );
}

function TimelineSlicer() {
    return (
        <Timeline>
            <TimelineHead>
                <SlicerTitle>التاريخ</SlicerTitle>
                <ClearFilter />
            </TimelineHead>
            <RangeRow>
                <RangeText>كانون الثاني - آب 2020</RangeText>
                <LevelPicker>
                    <span>الأشهر</span>
                    <Caret $off />
                </LevelPicker>
            </RangeRow>
            <YearRow>2020</YearRow>
            <MonthRow>
                {months.map((m) => (
                    <MonthLabel key={m}>{m}</MonthLabel>
                ))}
            </MonthRow>
            <MonthBar>
                {months.map((m) => (
                    <MonthSegment key={m} />
                ))}
            </MonthBar>
            <TimelineScroll>
                <ScrollEnd><Arrow dir="r" color="#888" /></ScrollEnd>
                <TimelineGap $w={115} $tint />
                <TimelineThumb />
                <TimelineGap $w={155} />
                <ScrollEnd><Arrow dir="l" color="#888" /></ScrollEnd>
            </TimelineScroll>
        </Timeline>
    );
}

function PivotTable() {
    return (
        <Pivot>
            <PivotHeadTop $tone="head" />
            <PivotHeadTop $tone="head" />
            <PivotHeadTop $tone="head" />
            <PivotHeadTop $tone="head" />
            <PivotHeadTop $tone="head" />
            <PivotHeadTop $tone="head" $bold>القيم</PivotHeadTop>
            <PivotHeadTop $tone="head" />

            <PivotCell $tone="head" $bold>
                البيان
                <FilterBadge><FilterGlyph /></FilterBadge>
            </PivotCell>
            <PivotCell $tone="head" $bold>
                التاريخ
                <FilterBadge><FilterGlyph /></FilterBadge>
            </PivotCell>
            <PivotCell $tone="head" $bold>
                رقم القيد
                <FilterBadge><BigCaret /></FilterBadge>
            </PivotCell>
            <PivotCell $tone="head" $bold>
                الفروقات
                <FilterBadge><BigCaret /></FilterBadge>
            </PivotCell>
            <PivotCell $tone="head" $bold>
                اتزان القيد
                <FilterBadge><BigCaret /></FilterBadge>
            </PivotCell>
            <PivotCell $tone="head" $bold $size={11.5}>
                مجموع من مدين6
            </PivotCell>
            <PivotCell $tone="head" $bold $size={11.5}>
                مجموع من دائن 6
            </PivotCell>

            <PivotCell $tone="body" $bold $size={11.5}>
                <CellLead><Outline />دفع إيصال الكهرباء</CellLead>
            </PivotCell>
            <PivotCell $tone="body" $bold $size={13}>
                <CellLead><Outline />3/1/2020</CellLead>
            </PivotCell>
            <PivotCell $tone="body" $size={13}>
                <CellLead><Outline />3</CellLead>
            </PivotCell>
            <PivotCell $tone="body" $bold $size={13}>
                <CellLead><Outline />0</CellLead>
            </PivotCell>
            <PivotCell $tone="body" $size={11} $inset={5}>متزن</PivotCell>
            <PivotCell $tone="body" $size={13}>23000</PivotCell>
            <PivotCell $tone="body" />

            <PivotCell $tone="total" $bold $size={11}>الإجمالي الكلي</PivotCell>
            <PivotCell $tone="total" />
            <PivotCell $tone="total" />
            <PivotCell $tone="total" />
            <PivotCell $tone="total" />
            <PivotCell $tone="total" $bold $size={13}>23000</PivotCell>
            <PivotCell $tone="total" />
        </Pivot>
    );
}

export default function App() {
    return (
        <Page>
            <GlobalStyle />
            <TitleBar>
                <WindowButton><CloseIcon /></WindowButton>
                <WindowButton><RestoreIcon /></WindowButton>
                <WindowButton><MinimizeIcon /></WindowButton>
                <WindowButton><RibbonDisplay /></WindowButton>
                <TitleSpacer $w={474} />
                <ContextTitle>أدوات الخط الزمني</ContextTitle>
                <DocTitle>برنامج محاسبي عبد الرحمن - Excel</DocTitle>
                <TitleSpacer $w={4} />
                <QatSlot $w={14}><Caret /></QatSlot>
                <TitleSpacer $w={15} />
                <QatSlot $w={10}><Caret $off /></QatSlot>
                <QatSlot $w={28}><UndoIcon /></QatSlot>
                <TitleSpacer $w={7} />
                <QatSlot $w={10}><Caret $off /></QatSlot>
                <QatSlot $w={26}><UndoIcon flip /></QatSlot>
                <TitleSpacer $w={19} />
                <QatSlot $w={24}><SaveIcon /></QatSlot>
            </TitleBar>
            <TabStrip>
                {ribbonTabs.map(([name, w], i) => (
                    <TabItem key={name} $w={w} $active={i === 1}>
                        {name}
                    </TabItem>
                ))}
                <TabItem $w={96} $context>خيارات</TabItem>
                <TellMe>
                    <BulbIcon />
                    <TellMeText>أخبرني بما تريد القيام به...</TellMeText>
                </TellMe>
                <SignIn>تسجيل الدخول</SignIn>
                <ShareBox>
                    مشاركة
                    <UserPlus />
                </ShareBox>
            </TabStrip>
            <RibbonContent />
            <FormulaBar>
                <NameBox>
                    <NameText>التاريخ 4</NameText>
                    <BigCaret />
                </NameBox>
                <Grip>⋮</Grip>
                <FormulaButtons>
                    <Svg w={12} h={12}><path d="M1.5 1.5l9 9M10.5 1.5l-9 9" stroke="#bdbdbd" strokeWidth="1.6" /></Svg>
                    <Svg w={14} h={12}><path d="M1 6l4 4 8-9" stroke="#bdbdbd" strokeWidth="2" /></Svg>
                    <FxLabel>fx</FxLabel>
                </FormulaButtons>
                <FormulaInput>
                    <BigCaret />
                </FormulaInput>
            </FormulaBar>
            <Workbook>
                <VScroll>
                    <VButton><Arrow dir="u" /></VButton>
                    <VThumb />
                    <VTrack />
                    <VButton><Arrow dir="d" /></VButton>
                </VScroll>
                <SheetArea>
                    <ColumnHeaders>
                        <Corner />
                        {columns.map(([letter, w]) => (
                            <ColumnCell key={letter} $w={w}>
                                {letter}
                            </ColumnCell>
                        ))}
                    </ColumnHeaders>
                    <SheetBody>
                        <RowHeaders>
                            {rowHeights.map((h, i) => (
                                <RowCell key={i} $h={h}>
                                    {i + 1}
                                </RowCell>
                            ))}
                        </RowHeaders>
                        <Canvas>
                            <Frame>
                                <FrameTop>
                                    <SideColumn>
                                        <BalanceTable>
                                            {balances.map(([label, value]) => (
                                                <React.Fragment key={label}>
                                                    <BalanceLabel>{label}</BalanceLabel>
                                                    <BalanceValue>{value}</BalanceValue>
                                                </React.Fragment>
                                            ))}
                                        </BalanceTable>
                                        <PageFilter>
                                            <PageFilterKey>ح / المصروف</PageFilterKey>
                                            <PageFilterValue>
                                                مصروف كهرباء ومبياه
                                                <PageFilterBadge><FilterGlyph /></PageFilterBadge>
                                            </PageFilterValue>
                                        </PageFilter>
                                    </SideColumn>
                                    <SlicerStack>
                                        <Slicer>
                                            <SlicerHead>
                                                <SlicerTitle>ح / المصروف</SlicerTitle>
                                                <SlicerTools>
                                                    <ClearFilter />
                                                    <MultiSelect />
                                                </SlicerTools>
                                            </SlicerHead>
                                            <SlicerItems>
                                                <SlicerItem $on>مصروف كهرباء ومبياه</SlicerItem>
                                                <SlicerItem>(فارغ)</SlicerItem>
                                            </SlicerItems>
                                        </Slicer>
                                        <TimelineSlicer />
                                        <Handle $x={5} $y={79} />
                                        <Handle $x={258} $y={79} />
                                        <Handle $x={510} $y={79} />
                                        <Handle $x={5} $y={143} />
                                        <Handle $x={510} $y={143} />
                                        <Handle $x={5} $y={207} />
                                        <Handle $x={258} $y={207} />
                                        <Handle $x={510} $y={207} />
                                    </SlicerStack>
                                </FrameTop>
                                <PivotTable />
                            </Frame>
                        </Canvas>
                    </SheetBody>
                </SheetArea>
            </Workbook>
            <SheetTabsBar>
                <TabNav>
                    <Arrow dir="r" color={GREEN} />
                    <TitleSpacer $w={20} />
                    <Arrow dir="l" color="#c4c4c4" />
                    <NavDots>...</NavDots>
                </TabNav>
                <SheetTab $w={123} $bg="#92d050" $fg="#222">كشف حساب البنك</SheetTab>
                <SheetTab $w={135} $bg="#ff0000" $fg="#fff">كشف حساب العملاء</SheetTab>
                <SheetTab $w={143} $bg="#ff0000" $fg="#fff">كشف حساب الموردين</SheetTab>
                <ActiveSheetTab>
                    <ActiveSheetFill>كشف حساب المصروفات</ActiveSheetFill>
                </ActiveSheetTab>
                <PlainTab>ورقة2</PlainTab>
                <AddSheet>
                    <Svg w={15} h={15}>
                        <circle cx="7.5" cy="7.5" r="6.5" stroke="#777" />
                        <path d="M4 7.5h7M7.5 4v7" stroke="#555" />
                    </Svg>
                </AddSheet>
                <HScrollDots>⋮</HScrollDots>
                <HScroll>
                    <HButton><Arrow dir="l" /></HButton>
                    <HTrack />
                    <HThumb />
                    <HButton><Arrow dir="r" /></HButton>
                </HScroll>
            </SheetTabsBar>
            <StatusBar>
                <ZoomText>100 %</ZoomText>
                <ZoomSign>+</ZoomSign>
                <ZoomTrack>
                    <ZoomThumb />
                </ZoomTrack>
                <ZoomSign>-</ZoomSign>
                <ViewButton $w={39}><Box kind="break" /></ViewButton>
                <ViewButton $w={38}><Box kind="layout" /></ViewButton>
                <ViewButton $w={38} $on><Box kind="grid" /></ViewButton>
                <StatusRight>
                    <Box kind="calc" />
                    <ReadyText>جاهز</ReadyText>
                </StatusRight>
            </StatusBar>
            <BottomEdge />
            <Watermark>
                <WatermarkAr>مستقل</WatermarkAr>
                <WatermarkEn>mostaql.com</WatermarkEn>
            </Watermark>
        </Page>
    );
}
